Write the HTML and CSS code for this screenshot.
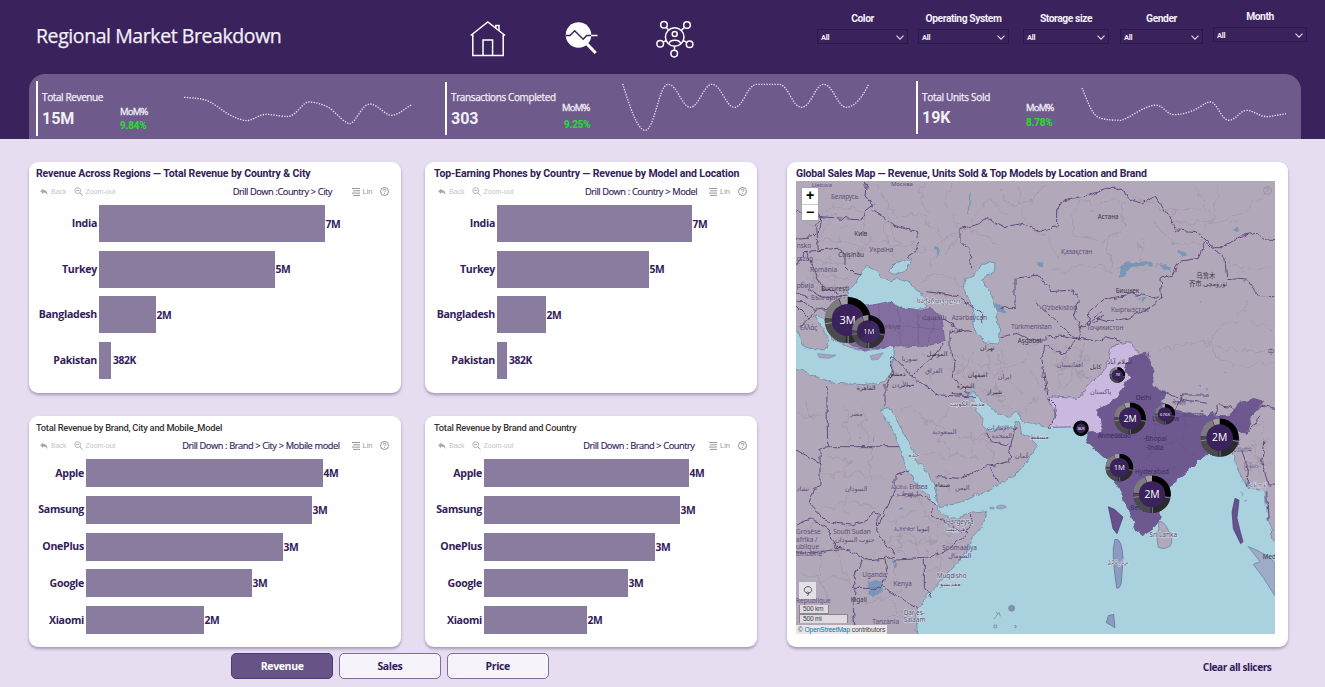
FILE: index.html
```html
<!DOCTYPE html>
<html lang="en">
<head>
<meta charset="utf-8">
<title>Regional Market Breakdown</title>
<link rel="stylesheet" href="styles.css">
</head>
<body>
<svg class="defs" aria-hidden="true">
  <symbol id="undo" viewBox="0 0 8 8"><path d="M3.2.4v1.7C6 2.100 7.600 3.700 7.400 7.400 6.800 5.300 5.600 4.500 3.200 4.500v1.700L.2 3.200z" fill="#a9a9a9"/></symbol>
  <symbol id="zoomout" viewBox="0 0 9 9"><circle cx="3.700" cy="3.600" r="2.900" fill="none" stroke="#a9a9a9" stroke-width=".9"/><path d="M2.200 3.600h3M5.900 5.900l2.700 2.700" stroke="#a9a9a9" fill="none"/></symbol>
  <symbol id="list" viewBox="0 0 8 8"><path d="M0 .5h8M1 2.800h7M0 5.100h8M1 7.400h7" stroke="#8a8a8a" stroke-width=".9"/></symbol>
  <symbol id="help" viewBox="0 0 9 9"><circle cx="4.500" cy="4.500" r="4" fill="none" stroke="#777" stroke-width=".8"/><path d="M3.200 3.600c0-1.700 2.600-1.700 2.600 0 0 .8-1.300.8-1.300 1.700M4.500 6.200v.8" fill="none" stroke="#777" stroke-width=".8"/></symbol>
  <symbol id="chev" viewBox="0 0 8 5"><path d="M.5.7 4 4.200 7.500.7" fill="none" stroke="#e6e0ef" stroke-width="1.100"/></symbol>
  <symbol id="donut" viewBox="-50 -50 100 100">
    <circle r="49" fill="#3a225d"/>
    <g fill="none" stroke-width="15" transform="rotate(-90)">
      <circle r="42" stroke="#020202" pathLength="100" stroke-dasharray="27 73"/>
      <circle r="42" stroke="#2b2b2b" pathLength="100" stroke-dasharray="23 77" stroke-dashoffset="-28"/>
      <circle r="42" stroke="#4b4b4b" pathLength="100" stroke-dasharray="24 76" stroke-dashoffset="-51.500"/>
      <circle r="42" stroke="#7c7c7c" pathLength="100" stroke-dasharray="17 83" stroke-dashoffset="-76"/>
      <circle r="42" stroke="#a0a0a0" pathLength="100" stroke-dasharray="6.500 93.500" stroke-dashoffset="-93.500"/>
    </g>
    <path d="M1 34v15M-34 6l-15 2M34 7l15 3" stroke="#bbb" stroke-width="1.500"/>
  </symbol>
</svg>

<header class="header">
  <div class="topbar">
    <h1>Regional Market Breakdown</h1>
    <nav class="nav">
      <svg class="home" viewBox="0 0 36 36"><path d="M.7 14.500 17.800 1l17.300 13.500M2.800 13v21.600h30.400V13M13 34.600V19h9.600v15.600M25.800 7.300V4.500h3.200v5.300" fill="none" stroke="#fff" stroke-width="1.500"/></svg>
      <svg class="search" viewBox="0 0 36 36"><circle cx="14.500" cy="14" r="12.800" fill="#fff"/><path d="M2 14.500h4l4.700-4.800 8.500 8.500 3.500-3.800h5" fill="none" stroke="#3a225d" stroke-width="1.500"/><path d="M27 14.500h6.500" stroke="#fff" stroke-width="1.500"/><path d="M23 23l8.700 9" stroke="#fff" stroke-width="3.200"/></svg>
      <svg class="people" viewBox="0 0 38 38" fill="none" stroke="#fff" stroke-width="1.500"><circle cx="18.700" cy="17" r="9.300"/><circle cx="18.700" cy="14" r="2.500"/><path d="M12.800 24c1-5 11-5 12 0M10.200 7.200l2.200 2.600M28.500 7.500l-3 2.600M7.400 21.900l3.200-1.400M30.400 22.100l-3.200-1.600M18.500 26.500v3.200"/><circle cx="8" cy="4.700" r="3.300"/><circle cx="31" cy="5" r="3.300"/><circle cx="4.200" cy="23.700" r="3.300"/><circle cx="33.600" cy="24.200" r="3.300"/><circle cx="18.200" cy="33.600" r="3.300"/></svg>
    </nav>
    <div class="slicers">
      <label class="slicer s1"><span>Color</span><b>All<svg><use href="#chev"/></svg></b></label>
      <label class="slicer s2"><span>Operating System</span><b>All<svg><use href="#chev"/></svg></b></label>
      <label class="slicer s3"><span>Storage size</span><b>All<svg><use href="#chev"/></svg></b></label>
      <label class="slicer s4"><span>Gender</span><b>All<svg><use href="#chev"/></svg></b></label>
      <label class="slicer s5"><span>Month</span><b>All<svg><use href="#chev"/></svg></b></label>
    </div>
  </div>
  <section class="kpis">
    <div class="kpi k1">
      <div class="fig"><span>Total Revenue</span><strong>15M</strong></div>
      <div class="mom"><span>MoM%</span><em>9.84%</em></div>
      <svg class="spark" viewBox="552 240 690 150"><path d="M552 292C580 294 605 295 622 302 650 315 670 335 690 345 715 357 730 362 742 362 765 358 780 342 800 343 830 345 850 351 867 349 895 342 905 307 928 306 950 307 975 315 990 325 1015 345 1035 371 1050 371 1070 365 1085 313 1110 312 1135 314 1155 346 1175 346 1200 343 1215 325 1234 315"/></svg>
    </div>
    <div class="kpi k2">
      <div class="fig"><span>Transactions Completed</span><strong>303</strong></div>
      <div class="mom"><span>MoM%</span><em>9.25%</em></div>
      <svg class="spark" viewBox="545 240 750 160"><path d="M547 252C565 310 590 391 614 391 643 391 655 253 683 253 710 253 725 322 750 322 775 322 790 253 815 253 842 253 857 322 882 322 910 322 920 253 950 253H1015C1045 253 1055 322 1084 322 1112 322 1125 253 1150 253 1178 253 1192 322 1218 322 1245 322 1270 285 1285 253"/></svg>
    </div>
    <div class="kpi k3">
      <div class="fig"><span>Total Units Sold</span><strong>19K</strong></div>
      <div class="mom"><span>MoM%</span><em>8.78%</em></div>
      <svg class="spark" viewBox="605 240 620 150"><path d="M608 264C622 295 635 340 655 351 675 360 695 360 725 361 755 353 790 318 830 315 855 318 860 343 885 344 915 343 940 333 960 322 975 312 985 305 995 306 1015 310 1025 361 1050 361 1075 357 1080 331 1105 331 1125 333 1140 350 1165 350 1185 348 1200 344 1220 341"/></svg>
    </div>
  </section>
</header>

<main class="board">
  <section class="charts">
    <article class="card tall">
      <h2>Revenue Across Regions — Total Revenue by Country &amp; City</h2>
      <div class="tools"><svg class="i-u"><use href="#undo"/></svg><i>Back</i><svg class="i-z"><use href="#zoomout"/></svg><i>Zoom-out</i><span class="drill">Drill Down :Country &gt; City</span><svg class="i-l"><use href="#list"/></svg><small>Lin</small><svg class="i-h"><use href="#help"/></svg></div>
      <div class="bars">
        <div class="row"><span>India</span><div class="bar" style="width:226px"></div><b>7M</b></div>
        <div class="row"><span>Turkey</span><div class="bar" style="width:176px"></div><b>5M</b></div>
        <div class="row"><span>Bangladesh</span><div class="bar" style="width:57px"></div><b>2M</b></div>
        <div class="row"><span>Pakistan</span><div class="bar last" style="width:12px"></div><b>382K</b></div>
      </div>
    </article>
    <article class="card tall">
      <h2>Top-Earning Phones by Country — Revenue by Model and Location</h2>
      <div class="tools"><svg class="i-u"><use href="#undo"/></svg><i>Back</i><svg class="i-z"><use href="#zoomout"/></svg><i>Zoom-out</i><span class="drill">Drill Down : Country &gt; Model</span><svg class="i-l near"><use href="#list"/></svg><small>Lin</small><svg class="i-h"><use href="#help"/></svg></div>
      <div class="bars">
        <div class="row"><span>India</span><div class="bar" style="width:195px"></div><b>7M</b></div>
        <div class="row"><span>Turkey</span><div class="bar" style="width:152px"></div><b>5M</b></div>
        <div class="row"><span>Bangladesh</span><div class="bar" style="width:49px"></div><b>2M</b></div>
        <div class="row"><span>Pakistan</span><div class="bar last" style="width:10px"></div><b>382K</b></div>
      </div>
    </article>
    <article class="card short">
      <h3>Total Revenue by Brand, City and Mobile_Model</h3>
      <div class="tools"><svg class="i-u"><use href="#undo"/></svg><i>Back</i><svg class="i-z"><use href="#zoomout"/></svg><i>Zoom-out</i><span class="drill">Drill Down : Brand &gt; City &gt; Mobile model</span><svg class="i-l near"><use href="#list"/></svg><small>Lin</small><svg class="i-h"><use href="#help"/></svg></div>
      <div class="bars">
        <div class="row"><span>Apple</span><div class="bar" style="width:237px"></div><b>4M</b></div>
        <div class="row"><span>Samsung</span><div class="bar" style="width:226px"></div><b>3M</b></div>
        <div class="row"><span>OnePlus</span><div class="bar" style="width:197px"></div><b>3M</b></div>
        <div class="row"><span>Google</span><div class="bar" style="width:166px"></div><b>3M</b></div>
        <div class="row"><span>Xiaomi</span><div class="bar" style="width:118px"></div><b>2M</b></div>
      </div>
    </article>
    <article class="card short">
      <h3>Total Revenue by Brand and Country</h3>
      <div class="tools"><svg class="i-u"><use href="#undo"/></svg><i>Back</i><svg class="i-z"><use href="#zoomout"/></svg><i>Zoom-out</i><span class="drill">Drill Down : Brand &gt; Country</span><svg class="i-l mid"><use href="#list"/></svg><small>Lin</small><svg class="i-h"><use href="#help"/></svg></div>
      <div class="bars">
        <div class="row"><span>Apple</span><div class="bar" style="width:205px"></div><b>4M</b></div>
        <div class="row"><span>Samsung</span><div class="bar" style="width:196px"></div><b>3M</b></div>
        <div class="row"><span>OnePlus</span><div class="bar" style="width:171px"></div><b>3M</b></div>
        <div class="row"><span>Google</span><div class="bar" style="width:144px"></div><b>3M</b></div>
        <div class="row"><span>Xiaomi</span><div class="bar" style="width:103px"></div><b>2M</b></div>
      </div>
    </article>
  </section>

  <article class="card mapcard">
    <h2>Global Sales Map — Revenue, Units Sold &amp; Top Models by Location and Brand</h2>
    <div class="map">
      <svg class="geo" viewBox="33 78 1437 1359" preserveAspectRatio="none">
        <filter id="rough" x="0" y="0" width="1500" height="1500" filterUnits="userSpaceOnUse"><feTurbulence type="fractalNoise" baseFrequency=".045" numOctaves="2" seed="4"/><feDisplacementMap in="SourceGraphic" scale="18" xChannelSelector="R" yChannelSelector="G"/></filter>
        <filter id="rough2" x="0" y="0" width="1500" height="1500" filterUnits="userSpaceOnUse"><feTurbulence type="fractalNoise" baseFrequency=".03" numOctaves="2" seed="9"/><feDisplacementMap in="SourceGraphic" scale="50" xChannelSelector="R" yChannelSelector="G"/></filter>
        <rect x="33" y="78" width="1440" height="1362" fill="#b1a8b9"/>
        <g class="prov" filter="url(#rough2)">
          <path d="M100 180l60-30 90 30M270 90l50 80 90 10 60 70 80-30 90 50M400 90l30 90M500 90l-20 70 60 60 70-80 60 40M640 90l30 60 60-10 50-50M310 180l20 80 80 30 90-50M440 330l60-60 20-70M400 380l60-30 70 40M430 410l90 20M700 90l10 100 80 70 40 60M860 180l30-40 120 0 10 80-60 40-100-20zM800 350l90-20 90 12H1080M970 250l0 90M1070 250l0 70 70 20M1010 150l70-20 60 40 100-10M1100 200l70 70 80-10M1160 200l120 0M1230 100l50 90-40 60M1300 90l-20 120 90-20 70-80M1300 280l60 60 100 10M1400 440l-60 60-70 40 20 60 100 40 80-30M1110 590l120-30 90 20 140 10M1400 500l60 20"/>
          <path d="M60 200l40 60 70-10 50 30 60-30 70 30M110 260l20-60 60-30M160 260l20-60M230 250l10-60M290 260l20-70M230 250l40 50M300 240l30 70M40 280l60 40 80 10M60 380l60-20 80 20M50 430l60-40M80 330l20 60M140 300l10 100 50 10M100 390l40 40M45 490l50-40 30 40M50 480l30 50"/>
          <path d="M500 590l60 60 90 10 60 50M560 590l-20 90 70 50M640 600l-10 120 70 50M700 620l-90 50M720 640l60 60-60 70M660 580l-10 60M760 560l-60 60M480 640l60 10M800 570l90 20-10 60 60 40M820 650l70-20M840 700l40-100M900 560l-20 60M350 640l60 50M420 590l20 90M350 750l150 90M500 740l-50 80 40 80 100 10M520 850l90-20M420 890l70 20M550 930l20-80 100 0M490 950l0 60M560 940l-30 70M610 860l20 60"/>
          <path d="M810 580l20 60-20 60M840 570l10 70 60 30M870 580l50 40M790 620l120-10M560 690l90 40M530 600l60 30 80-10M520 620l30 40M610 590l10 60M490 600l80 110M300 1160l80 60M330 1140l60 30 80-30"/>
          <path d="M33 780h90M60 740l20 60M150 950h0M180 760l10 100M230 750l10 120M130 910l60 0 0 50-80 0M260 890l-10 90M190 960l70 0 50 30M110 1060l80-20 90 20M200 990l-20 90M340 1090l60-20M310 1080l80 60 10 90M400 1010l20 80 80 20M450 1110l-30 90M480 1140l80-20M350 1140l-10 60M300 1170l80-40M60 1120l100-20 60 20M180 1130l0 60M60 1200l110-20M60 1260l140 20M100 1200l30 150M150 1180l50 140M260 1230l40 70M330 1230l10 80M290 1320l60 60M230 1350l100-30M300 1400l80-10M420 1260l40-30M460 1180l10 80M500 1160l10 90"/>
          <path d="M1380 780l60 20M1390 830l50-30M1390 880l60-20M1400 920l50 10M1410 840l20 110M1440 780l-10 60"/>
        </g>
        <g fill="#a9d1de" stroke="#7892b4" stroke-width="3" filter="url(#rough)">
          <path d="M400 1455L392 1380 402 1355 430 1315 480 1265 530 1210 550 1175 575 1130 600 1095 605 1070 560 1075 510 1090 480 1085 460 1065 455 1055 430 1020 385 975 360 930 345 870 320 820 288 765 310 758 340 800 365 855 400 920 435 965 452 1005 460 1055 530 1040 620 1000 690 960 700 950 728 915 745 890 755 870 735 845 710 835 702 800 690 800 688 820 650 815 620 830 600 820 585 780 565 740 553 715 572 713 600 745 640 775 670 790 692 768 715 803 790 817 865 815 905 835 910 865 955 905 975 910 990 970 1030 1065 1055 1125 1075 1140 1100 1125 1125 1095 1125 1060 1155 990 1220 940 1260 900 1340 890 1360 940 1385 995 1440 1010 1445 1060 1465 1160 1500 1180V1480H400z"/>
          <path d="M245 330L225 365 195 400 190 430 230 450 255 452 310 440 340 455 400 465 425 450 415 430 385 390 340 370 315 377 285 368 275 345z"/>
          <path d="M310 350l25-25 45-13-20 33-30 13zM590 325l40-3-2 28-38 25 20 25 15 40 15 50 5 55-5 20-40-5-30-25-5-45-5-40-25-50 5-30 35-20z"/>
          <path d="M0 515l33 0 25 60 60 15 15-30-45-80 30 10 10 35 25 35 45 18 55 8 72-15 5 38-25 70-70 10-100-5-70-32-65-20z"/>
        </g>
        <g fill="#7996b8" filter="url(#rough)"><path d="M1005 365q-2-45 35-43l60-2 0 10-60 6-20 25zM1120 328l35 5 6 22zM250 1282l40-5 0 35-25 20-15-20zM322 1200l5 0 10 40-6-2zM630 440l35 20-10 15-25-8zM1055 430l30 0-8 10zM1180 280l25 15 0 7-25-8zM1345 220l15-5 5 12-15 5zM753 325l28 0-15 13zM270 840l-6 20 5 2zM222 846l8-2 0 6zM343 1060l10-3 2 8-10 3zM1320 650l8 0 0 6zM1245 440h12v6h-12zM1240 690h8v6zM1260 700h12v6zM202 1340l8 70 10 30-12 0zM915 165l8-3v8zM450 270l15 15-10 25zM555 110l-10 70 5-2 7-60z"/></g>
        <g fill="#aaa1bc" stroke="#7892b4" stroke-width="2"><path d="M98 596l55 5-20 9-30-2zM255 603l40-10-15 20-20 2zM635 1054q20-8 30 2-15 10-30 4zM615 1057h12v5h-12z"/></g>
        <g fill="#b1a8b9" stroke="#7892b4" stroke-width="3"><path d="M1120 1100q15-5 30 25 18 35 5 48-15 12-35 4-8-35 2-55z"/><path d="M1390 1175l25 10 35 20 20 18v100l-35-55-30-40 20-8z" fill="#9dabc6"/></g>
        <path d="M970 1055l18 8 26 23-18 50-12-15zM1350 1030l12 5-6 55 10 40 8 30-7 6-22-45-4-50z" fill="#66518a" stroke="#4c3678" stroke-width="2"/>
        <path d="M990 1153q22-5 24 60l-5 70q-5 20-14 16-12-80-10-120zM970 1382l16-4 4 40-26-15z" fill="#8a9dc0" stroke="#5d6594" stroke-width="2"/>
        <g filter="url(#rough)" stroke="#6c5592" stroke-width="2">
          <path d="M200 572L250 583 320 572 410 575 480 560 470 485 440 460 400 465 340 455 310 442 255 452 210 470 195 500 190 540z" fill="#826e9f"/>
          <path d="M980 572L1030 560 1065 595 1030 612 1020 650 1035 665 1005 710 985 740 935 765 950 810 955 830 905 835 865 815 790 817 815 780 785 725 875 730 915 685 955 650 970 610z" fill="#c9b9df"/>
          <path d="M1065 597L1085 595 1105 640 1098 690 1140 710 1130 745 1180 770 1270 785 1282 765 1290 785 1340 780 1360 745 1410 730 1435 740 1400 780 1385 835 1355 830 1362 870 1340 890 1260 900 1220 940 1155 990 1125 1060 1125 1095 1100 1125 1075 1140 1055 1125 1030 1065 990 970 975 910 955 905 910 865 905 835 955 830 950 810 935 765 985 740 1005 710 1035 665 1020 650 1030 612z" fill="#6e5990"/>
          <path d="M1080 700l-30 70 60 40 60-20M960 850l90-10 60 40 90-30M1010 900l80 10 60 70M1040 980l60-40 90 0M1060 1060l50-40M1200 790l-10 90 50 30M1110 820l-20 90M280 450l10 120M340 460l10 105M400 470l0 95M450 490l-20 70M230 510l240 10" fill="none" stroke="#5d4883" stroke-opacity=".45"/>
        </g>
        <g class="borders" filter="url(#rough)">
          <path d="M110 185L170 190 230 195 240 170 265 150 240 120 245 80M33 250L85 245 105 225 110 185 60 170 33 165M110 185l-15 25 5 75 60-5 20 15 0 35 25 25 25 5M265 165l25 15 30 30 75 20 5 55-30 20M60 290l50-5M33 330l30-40 50 110 75 25M70 400l45 30 70-10M33 410l40 20M95 470l-40-30-20 0M45 515l50-50 70-10M33 450l40 40"/>
          <path d="M560 340l-5-50-30-30 0-40 50-10 30-20 50 25 60-10 45 25 55-15 0-50 20-30 80-15 50-20 50 0 10 30 45 15 40-25 65 105 60 5 50 45 30 0 50-30 50-10 30 20 60 5 0-35 25-30"/>
          <path d="M1260 260l60 50 5 60 60 5 40 50 60 0M1260 260l-20 50-60 10-15 40-40 10 5 60-40 30-60 30-65 10-35-10M960 480l-50 30 5-40 40-35 90-20 75 15M900 510l50-40M690 370l70-10 40 50 65-5 15 35-15 40 20 35 20 0M690 370v90h-40M650 545l45-10 40 20 55 0M880 555l-60-50-50-45-20-20M780 550l40-10 60 10 10-40M430 410l90 15 70 50 0 30M470 490l50 30 40 10M495 530l0 60 15 30-5 50 50 45"/>
          <path d="M320 600l0 60-15 40M320 600l60 60 60-50 40-50M380 660l80 60 95 5M340 700l50-10M300 690l0 65M125 690L128 875 345 875M33 885L105 923 105 880 128 875M105 923V995L85 1000 72 1045 120 1095 155 1105 200 1110 240 1100 265 1070 280 1075 275 1130 330 1200 300 1210 240 1215 195 1185 155 1180 130 1125 80 1090 33 1110"/>
          <path d="M280 1110l50-100 0-50 45-15M340 1020l70 0 45 30M440 1060l0 20 45 25 60 30-60 55-65 20-90 5M560 1080v25l-20 30M418 1215v80l20 30M300 1210l5 40-15 45 110 65M290 1300l-80 0-5-25 25-60M210 1303l-5 60 5 50M33 1190l60 5 70-10M455 965l70 5 80-35 65-15 10-60 10-40M617 935l20 45M670 870l-50-10-15-25M500 715l70 10"/>
          <path d="M785 720l-5-40-10-70 10-40 55 30 25-30 20-20 70 10 10-15 50 15M785 725l25 25 0 40-20 25M1170 765l20-45 80 0M1130 710l70 25 70 10M1400 780l30-30 40 10M1385 835l40-50M1385 995l5-50-20-60M1440 860l-10 60 20 70 20 0M1445 1010l5 90M1290 780q5-35 20-30l30 5 10 15-20 15z"/>
        </g>
        <g class="labels">
          <text x="138" y="133" textLength="82">Беларусь</text><text x="80" y="96" class="s">Lietuva</text><text x="318" y="93" class="s">Москва</text>
          <text x="208" y="244" class="d">Київ</text><text x="253" y="290" textLength="72">Україна</text><text x="160" y="306" class="d">Chișinău</text><text x="75" y="352">România</text><text x="35" y="278">nsko</text><text x="35" y="319">rszág</text><text x="35" y="398">рбија</text><text x="108" y="407" class="d">București</text><text x="78" y="435">България</text><text x="45" y="526">Ελλάς</text><text x="280" y="521">Türkiye</text><text x="396" y="445" textLength="130" class="w">საქართველო</text><text x="410" y="496" textLength="75">Հայաստան</text><text x="500" y="496">Azərbaycan</text>
          <text x="938" y="193" class="d">Астана</text><text x="828" y="298" textLength="94">Қазақстан</text><text x="992" y="413" class="d">Бишкек</text><text x="978" y="471">Кыргызстан</text><text x="770" y="466">O‘zbekiston</text><text x="905" y="526">Тоҷикистон</text><text x="678" y="523" textLength="122">Türkmenistan</text><text x="698" y="563" class="d">Aşgabat</text>
          <text x="1234" y="370" class="d">乌鲁木</text><text x="1212" y="394" class="d">齐市 ئۈرۈمچی</text><text x="1448" y="597">中</text>
          <text x="495" y="532" class="d">تبریز</text><text x="585" y="585" class="d">تهران</text><text x="425" y="602" class="d">الموصل</text><text x="350" y="617">سوريا</text><text x="420" y="655">العراق</text><text x="548" y="666" class="d">اصفهان</text><text x="638" y="672">ایران</text><text x="515" y="698" class="d">البصرة</text><text x="605" y="717" class="d">شیراز</text><text x="215" y="704" class="d">القاهرة</text><text x="310" y="664" class="d">دمشق</text><text x="320" y="695">الأردن</text><text x="815" y="637">افغانستان</text><text x="915" y="642" class="d">کابل</text><text x="967" y="627" class="d">اسلام آباد</text><text x="915" y="716">پاکستان</text>
          <text x="195" y="783">مصر</text><text x="442" y="838">السعودية</text><text x="370" y="905" class="w">جدة</text><text x="495" y="752" class="w">مدينة الكويت</text><text x="605" y="826">الإمارات</text><text x="620" y="850">المتحدة</text><text x="690" y="910">عُمان</text><text x="735" y="852" class="w">مسقط</text><text x="180" y="1008">السودان</text><text x="35" y="1008">تشاد</text><text x="318" y="1003" textLength="110">ኤርትራ Eritrea</text><text x="352" y="1024">إريتريا</text><text x="450" y="996" class="d">صنعاء</text><text x="510" y="1006">اليمن</text>
          <text x="328" y="1128" textLength="106">ኢትዮጵያ إثيوبيا</text><text x="482" y="1107" class="d w">Hargeysa</text><text x="480" y="1129" class="d w">هرجيسا</text><text x="145" y="1137" textLength="112">South Sudan</text><text x="150" y="1160">جنوب السودان</text><text x="33" y="1138">Grosêse</text><text x="33" y="1160">afrîka /</text><text x="33" y="1181">ublique</text><text x="33" y="1202">africaine</text><text x="472" y="1186" textLength="104">Soomaaliya</text><text x="490" y="1208">الصومال</text><text x="455" y="1270" class="d w">Muqdisho</text><text x="465" y="1293" class="d w">مقديشو</text><text x="232" y="1266">Uganda</text><text x="325" y="1294">Kenya</text><text x="197" y="1342" class="d">Kigali</text><text x="33" y="1343">République</text><text x="262" y="1407">Tanzania</text><text x="356" y="1380" class="d w">Dar es-</text><text x="356" y="1401" class="d w">Salaam</text>
          <g class="on-dark"><text x="1052" y="735">Delhi</text><text x="1102" y="797">Lucknow</text><text x="938" y="849" textLength="100">Ahmedabad</text><text x="1076" y="857">·Bhopal</text><text x="1083" y="886">·India</text><text x="1050" y="957">Hyderabad</text><text x="1036" y="1066">Bengaluru</text></g>
          <text x="1162" y="750">नेपाल</text><text x="1192" y="785">काठमाडौं</text><text x="1093" y="1147" class="w">Sri Lanka</text><text x="968" y="1230" class="w">ދިވެހިރާއްޖެ</text><text x="1378" y="940">မြန်မာ</text><text x="1392" y="995" class="w">ရန်ကုန်</text><text x="1433" y="1212" class="d">Med</text><text x="1343" y="892">চট্টগ্রাম</text>
        </g>
        <g fill="none" stroke="#817b91" stroke-width="2"><circle cx="680" cy="1360" r="9" fill="#7996b8"/><path d="M627 1392l15-20 4 12M627 1410h8v8h-8zM690 1410l5 5-5 4zM634 1370l4 8M1368 1010q10 8 2 14M1378 1038l8-3M1400 870l5 5"/></g>
        <g class="pins">
          <use href="#donut" x="118" y="425" width="140" height="140"/><text x="188" y="506" font-size="33">3M</text>
          <g opacity=".9"><use href="#donut" x="200" y="480" width="100" height="100"/><text x="252" y="538" font-size="22">1M</text></g>
          <use href="#donut" x="973" y="636" width="48" height="48"/><text x="998" y="664" font-size="9">7M</text>
          <use href="#donut" x="987" y="742" width="96" height="96"/><text x="1035" y="800" font-size="27">2M</text>
          <use href="#donut" x="1109" y="747" width="62" height="62"/><text x="1140" y="783" font-size="13">676K</text>
          <use href="#donut" x="1246" y="790" width="116" height="116"/><text x="1304" y="859" font-size="31">2M</text>
          <circle cx="888" cy="820" r="19" fill="#3a225d" stroke="#050505" stroke-width="9"/><text x="888" y="824" font-size="10">382K</text>
          <use href="#donut" x="961" y="896" width="84" height="84"/><text x="1003" y="946" font-size="23">1M</text>
          <use href="#donut" x="1044" y="961" width="114" height="114"/><text x="1101" y="1029" font-size="31">2M</text>
        </g>
      </svg>
      <div class="zoom"><button>+</button><button>−</button></div>
      <svg class="maphelp"><use href="#help"/></svg>
      <div class="legend">
        <button class="lasso"><svg viewBox="0 0 12 12"><path d="M4.500 7.700C1.500 7.400 1.200 1.800 6 1.600c4.800.2 4.600 6 1 6.200-1-1.300-3-.7-2.500.5.500 1 2.200.4 2.500-.5-.2 1-.6 2-1.500 3" fill="none" stroke="#555"/></svg></button>
        <span class="scale km">500 km</span>
        <span class="scale mi">500 mi</span>
        <span class="attrib">© <a>OpenStreetMap</a> contributors</span>
      </div>
    </div>
  </article>
</main>

<footer class="footer">
  <div class="tabs"><button class="tab on">Revenue</button><button class="tab">Sales</button><button class="tab">Price</button></div>
  <span class="clear">Clear all slicers</span>
</footer>
</body>
</html>
```
FILE: styles.css
```css
* { box-sizing: border-box; }
body { margin: 0; width: 1325px; height: 687px; overflow: hidden; background: #e6ddf1; font-family: "Open Sans", "Noto Sans", sans-serif; color: #32205a; }
svg { display: block; }
button { font: inherit; padding: 0; margin: 0; border: 0; }
.defs { position: absolute; width: 0; height: 0; }

.header { height: 139px; background: #3a225d; padding: 0 24px 0 29px; color: #f3eef8; }
.topbar { height: 74px; display: flex; }
h1 { margin: 22px 0 0 7px; width: 434px; font-size: 19.5px; line-height: 28px; font-weight: 400; letter-spacing: -.42px; white-space: nowrap; -webkit-text-stroke: .25px; }
.nav { display: flex; width: 347px; padding-top: 20px; }
.home { width: 36px; height: 36px; margin-top: 1px; }
.search { width: 36px; height: 36px; margin-left: 58px; margin-top: 1px; }
.people { width: 38px; height: 38px; margin-left: 56px; }
.slicers { display: flex; margin-right: -6px; white-space: nowrap; font-family: Roboto, sans-serif; }
.slicer { display: flex; flex-direction: column; align-items: stretch; padding-top: 11px; }
.slicer span { text-align: center; font-size: 10.3px; font-weight: 700; line-height: 15px; height: 18px; letter-spacing: -.43px; }
.slicer b { display: flex; align-items: center; justify-content: space-between; height: 15px; padding: 1px 3px 0; border: 1px solid #2b1947; font-size: 7.500px; font-weight: 700; letter-spacing: -.2px; }
.slicer svg { width: 8px; height: 5px; }
.s1 { width: 91px; }
.s2 { width: 91px; margin-left: 10px; }
.s3 { width: 86px; margin-left: 14px; }
.s4 { width: 83px; margin-left: 11px; }
.s5 { width: 94px; margin-left: 10px; padding-top: 9px; }

.kpis { height: 65px; background: #6e5b8b; border-radius: 16px 16px 0 0; display: flex; }
.kpi { display: grid; align-content: start; padding-left: 7px; }
.k1 { width: 409px; grid-template-columns: 84px 64px 230px; }
.k2 { width: 471px; grid-template-columns: 117px 60px 250px; }
.k3 { width: 392px; grid-template-columns: 110px 55px 207px; }
.fig { border-left: 2px solid #fff; padding: 10px 0 0 4px; margin-top: 8px; height: 53px; white-space: nowrap; }
.fig span { display: block; font-size: 10px; line-height: 13px; letter-spacing: -.38px; -webkit-text-stroke: .25px; }
.fig strong { display: block; font: 700 16px/21px Roboto, sans-serif; margin-top: 3px; }
.k1 .fig { margin-top: 7px; height: 55px; }
.k1 .fig strong { margin-top: 4px; }
.k2 .fig { padding-top: 9px; }
.k2 .fig strong { margin-top: 4px; }
.k3 .fig { margin-top: 7px; }
.k3 .fig span { letter-spacing: -.3px; }
.mom { font-size: 9.500px; line-height: 14px; padding-top: 31px; letter-spacing: -.75px; -webkit-text-stroke: .3px; }
.mom span, .mom em { display: block; font-style: normal; }
.mom em { color: #1fe02c; font: 700 10px/14px Roboto, sans-serif; letter-spacing: -.2px; -webkit-text-stroke: 0; }
.k2 .mom { padding-top: 27px; }
.k2 .mom em { margin: 3px 0 0 2px; }
.k3 .mom { padding-top: 27px; }
.k3 .mom em { margin: 1px 0 0 0; }
.spark { fill: none; stroke: #e6dff0; stroke-width: 4; stroke-dasharray: 4 4; height: 50px; width: 230px; margin-top: 6px; }
.k2 .spark { width: 250px; height: 53.300px; }
.k3 .spark { width: 206.700px; }

.board { display: flex; gap: 30px; padding: 23px 0 0 29px; height: 508px; }
.charts { display: grid; grid-template-columns: 372px 332px; grid-template-rows: 231px 231px; gap: 23px 24px; }
.card { background: #fff; border-radius: 9px; box-shadow: 0 2px 3px rgba(70, 50, 100, .4); overflow: hidden; }
.charts .card:nth-child(even) { padding-left: 2px; }
h2, h3 { margin: 0; padding: 4px 0 0 7px; height: 21px; font: 700 10.500px/15px Roboto, sans-serif; letter-spacing: -.12px; white-space: nowrap; }
h3 { font-weight: 500; font-size: 9.300px; letter-spacing: -.23px; color: #333; }
.short h3 + .tools + .bars { padding-top: 5px; }
.tools { height: 17px; display: flex; align-items: center; padding: 0 12px 0 11px; white-space: nowrap; }
.charts .card:nth-child(even) .tools { padding-right: 10.500px; }
.tools i, .tools small { font: 7px/10px "Liberation Sans", sans-serif; color: #c4c4c4; }
.tools small { color: #999; font-size: 7.500px; }
.i-u { width: 8px; height: 8px; margin-right: 3px; }
.i-z { width: 9px; height: 9px; margin: 0 3px 0 7px; }
.i-l { width: 8px; height: 8px; margin: 0 2.500px 0 20px; }
.i-l.near { margin-left: 12.500px; }
.i-l.mid { margin-left: 15px; }
.i-h { width: 9px; height: 9px; margin-left: 7.500px; }
.drill { margin-left: auto; font-size: 9.300px; letter-spacing: -.5px; word-spacing: .3px; -webkit-text-stroke: .15px; }
.bars { display: flex; flex-direction: column; }
.tall .bars { padding-top: 5px; gap: 8.600px; }
.short .bars { gap: 8.800px; }
.row { display: flex; align-items: center; height: 37px; font: 700 10.600px/15px "Open Sans", sans-serif; }
.short .row { height: 28px; }
.row span { width: 68px; margin-right: 2px; text-align: right; letter-spacing: -.3px; }
.short .row span { width: 55px; }
.bar { height: 100%; background: #897c9f; }
.row b { font: 700 10.300px/14px "Open Sans", sans-serif; letter-spacing: -.4px; margin-left: .5px; }
.bar.last + b { margin-left: 2px; }

.mapcard { width: 501px; height: 485px; }
.mapcard h2 { padding-left: 9px; height: 19px; letter-spacing: -.18px; }
.map { position: relative; width: 479px; height: 453px; margin-left: 9px; overflow: hidden; }
.geo { width: 479px; height: 453px; }
.prov { fill: none; stroke: #998b9f; stroke-width: 2; opacity: .65; }
.borders { fill: none; stroke: #5f4a7e; stroke-width: 3; }
.labels { font: 19.500px "Noto Sans", "DejaVu Sans", "Noto Sans CJK SC", sans-serif; fill: #62507d; }
.labels .d { fill: #3d3748; font-size: 19px; }
.labels .s { font-size: 18px; }
.labels .w { paint-order: stroke; stroke: #d8e0e8; stroke-width: 3px; fill: #51466c; }
.labels .on-dark { fill: #3f2d62; }
.pins { font-family: "Open Sans", sans-serif; fill: #fff; text-anchor: middle; }
.zoom { position: absolute; left: 6px; top: 7px; width: 16px; display: grid; gap: 1px; background: #ccc; box-shadow: 0 0 1px #888; }
.zoom button { background: #fff; height: 15.500px; font: 700 14px/15px "Liberation Sans", sans-serif; color: #000; }
.maphelp { position: absolute; right: 3px; top: 5px; width: 9px; height: 9px; opacity: .5; }
.legend { position: absolute; left: 0; bottom: 0; display: flex; flex-direction: column; align-items: flex-start; font: 6.700px/8px "Liberation Sans", sans-serif; color: #444; }
.lasso { width: 17px; height: 17px; background: #e4e1e6; margin: 0 0 6px 3px; display: grid; place-items: center; }
.lasso svg { width: 12px; height: 12px; }
.scale { height: 9px; margin-left: 3px; padding-left: 3px; background: #dedae1; border: 1px solid #888; border-top: 0; letter-spacing: -.25px; }
.km { width: 30px; }
.mi { width: 49px; border: 1px solid #888; border-bottom: 0; }
.attrib { background: #e9e6ea; margin-top: 2px; padding: 0 2px; height: 9px; line-height: 9px; letter-spacing: -.13px; }
.attrib a { color: #0078a8; }

.footer { display: flex; justify-content: space-between; padding: 6px 53.500px 0 231px; }
.tabs { display: flex; gap: 5.500px; }
.tab { width: 102.300px; height: 26px; border: 1px solid #806d9c; border-radius: 5px; background: #f7f3fb; color: #32205a; font: 700 10.500px/25px "Open Sans", sans-serif; letter-spacing: -.35px; }
.tab.on { background: #685386; color: #fff; border-color: #4f3978; }
.clear { font: 700 10.200px/29px "Open Sans", sans-serif; letter-spacing: -.45px; }
```
